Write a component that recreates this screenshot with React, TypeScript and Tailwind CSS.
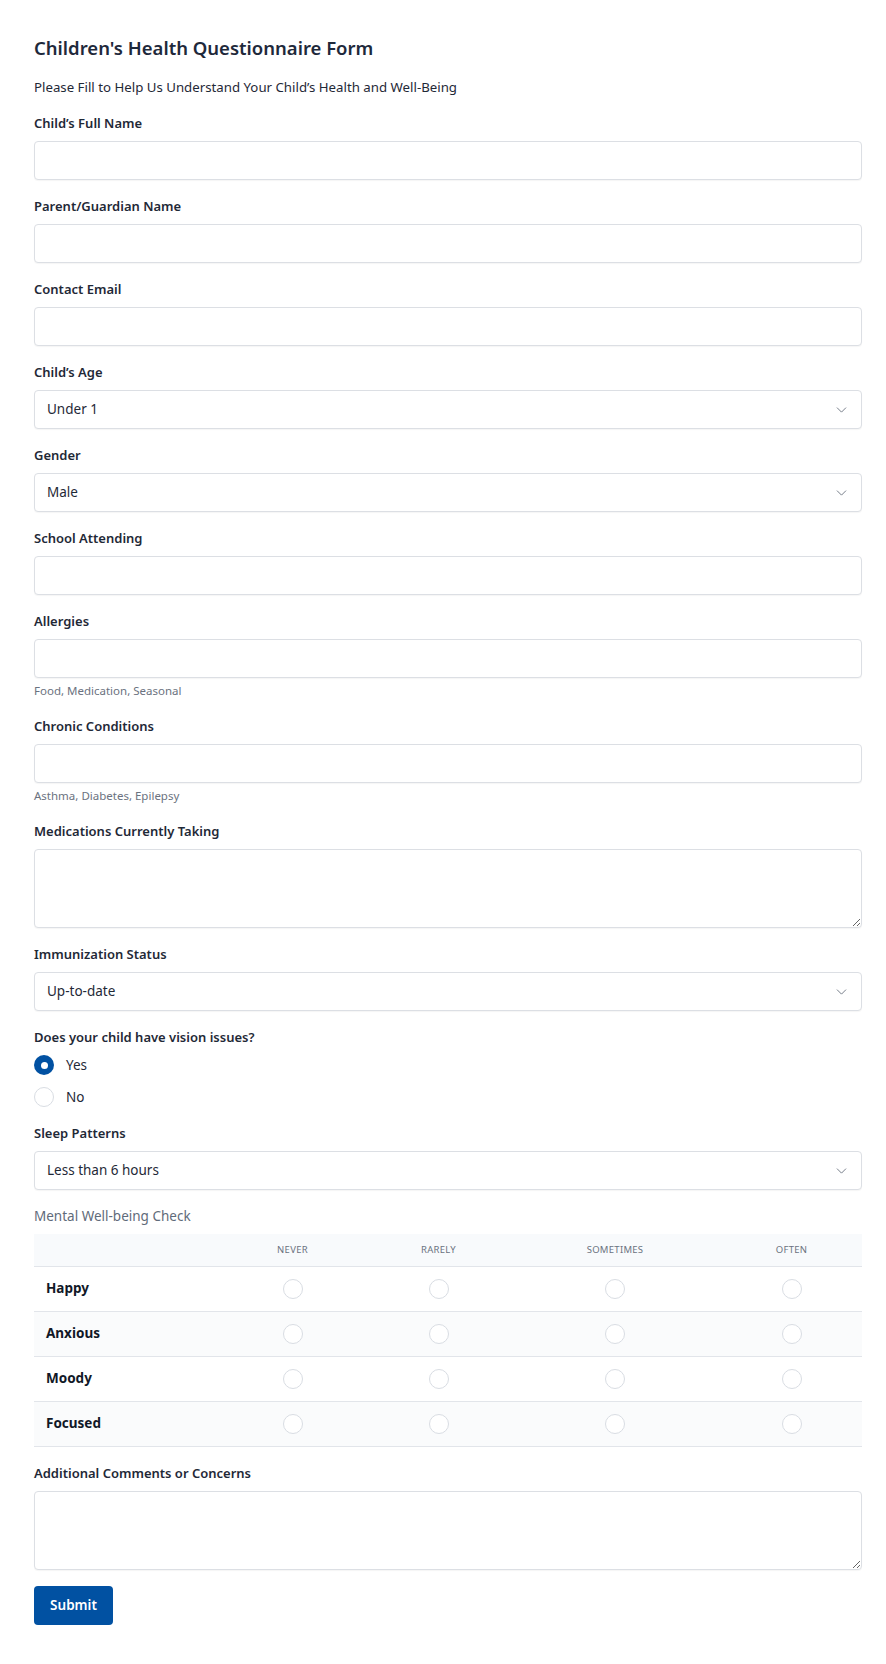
import React from 'react';
import { ChevronDown } from 'lucide-react';

const inputCls =
  'block w-full h-[39px] rounded-[4px] border border-[#dcdfe4] bg-white px-3 text-[13.5px] text-[#1f2937] shadow-[0_1px_1px_rgba(0,0,0,0.04)] outline-none';

function Label({ children }: { children: React.ReactNode }) {
  return <label className="block mb-2 text-[13px] leading-5 font-semibold text-[#1f2937]">{children}</label>;
}

function TextField({ label, help }: { label: string; help?: string }) {
  return (
    <div>
      <Label>{label}</Label>
      <input type="text" className={inputCls} />
      {help && <p className="mt-1 text-[11.5px] leading-[18px] text-[#6b7280]">{help}</p>}
    </div>
  );
}

function SelectField({ label, options }: { label: string; options: string[] }) {
  return (
    <div>
      <Label>{label}</Label>
      <div className="relative">
        <select className={inputCls + ' appearance-none pr-10'} defaultValue={options[0]}>
          {options.map((o) => (
            <option key={o}>{o}</option>
          ))}
        </select>
        <ChevronDown
          className="pointer-events-none absolute right-[12px] top-1/2 -translate-y-1/2 text-[#6b7280]"
          size={17}
          strokeWidth={1.3}
        />
      </div>
    </div>
  );
}

function AreaField({ label }: { label: string }) {
  return (
    <div>
      <Label>{label}</Label>
      <textarea className="block w-full h-[79px] rounded-[4px] border border-[#dcdfe4] bg-white px-3 py-2 text-[13.5px] outline-none shadow-[0_1px_1px_rgba(0,0,0,0.04)]" />
    </div>
  );
}

function Radio({ checked }: { checked?: boolean }) {
  return checked ? (
    <span className="flex h-5 w-5 items-center justify-center rounded-full bg-[#0151a2]">
      <span className="h-[7px] w-[7px] rounded-full bg-white" />
    </span>
  ) : (
    <span className="block h-5 w-5 rounded-full border border-[#d9dde3] bg-white" />
  );
}

const levels = ['Never', 'Rarely', 'Sometimes', 'Often'];
const widths = ['w-[151px]', 'w-[141px]', 'w-[212px]', 'w-[141px]'];
const moods = ['Happy', 'Anxious', 'Moody', 'Focused'];

export default function App() {
  return (
    <div className="min-h-screen bg-white pl-[34px] pr-[24px] pt-[34px] pb-10 font-['Noto_Sans',sans-serif] text-[#1f2937]">
      <h1 className="text-[18.5px] leading-7 font-semibold text-[#1e293b]">Children's Health Questionnaire Form</h1>
      <p className="mt-[15px] text-[13.25px] leading-5 text-[#1f2937]">
        Please Fill to Help Us Understand Your Child’s Health and Well-Being
      </p>

      <form className="mt-4 flex flex-col gap-4" onSubmit={(e) => e.preventDefault()}>
        <TextField label="Child’s Full Name" />
        <TextField label="Parent/Guardian Name" />
        <TextField label="Contact Email" />
        <SelectField label="Child’s Age" options={['Under 1', '1-3', '4-6', '7-12', '13-17']} />
        <SelectField label="Gender" options={['Male', 'Female', 'Other']} />
        <TextField label="School Attending" />
        <TextField label="Allergies" help="Food, Medication, Seasonal" />
        <TextField label="Chronic Conditions" help="Asthma, Diabetes, Epilepsy" />
        <AreaField label="Medications Currently Taking" />
        <SelectField label="Immunization Status" options={['Up-to-date', 'Partially', 'Not immunized']} />

        <div>
          <Label>Does your child have vision issues?</Label>
          <div className="flex flex-col gap-3">
            <div className="flex items-center gap-3">
              <Radio checked />
              <span className="text-[13.5px] leading-5">Yes</span>
            </div>
            <div className="flex items-center gap-3">
              <Radio />
              <span className="text-[13.5px] leading-5">No</span>
            </div>
          </div>
        </div>

        <SelectField label="Sleep Patterns" options={['Less than 6 hours', '6-8 hours', 'More than 8 hours']} />

        <div>
          <p className="mb-2 text-[13.5px] leading-5 text-[#5f6b7a]">Mental Well-being Check</p>
          <table className="w-full table-fixed border-collapse">
            <thead>
              <tr className="h-8 bg-[#f8fafc] border-b border-[#e2e5ea]">
                <th className="w-[183px]" />
                {levels.map((l, i) => (
                  <th
                    key={l}
                    className={
                      'text-center text-[9.5px] font-normal uppercase tracking-[0.03em] text-[#6b7280] ' + widths[i]
                    }
                  >
                    {l}
                  </th>
                ))}
              </tr>
            </thead>
            <tbody>
              {moods.map((m, r) => (
                <tr key={m} className={'h-[45px] border-b border-[#e2e5ea] ' + (r % 2 ? 'bg-[#fafbfc]' : 'bg-white')}>
                  <td className="pl-3 text-[13.5px] font-bold text-[#111827]">{m}</td>
                  {levels.map((l) => (
                    <td key={l}>
                      <div className="flex justify-center">
                        <Radio />
                      </div>
                    </td>
                  ))}
                </tr>
              ))}
            </tbody>
          </table>
        </div>

        <AreaField label="Additional Comments or Concerns" />

        <div>
          <button
            type="submit"
            className="h-[39px] w-[79px] rounded-[4px] bg-[#0151a2] text-[13.5px] font-semibold text-white"
          >
            Submit
          </button>
        </div>
      </form>
    </div>
  );
}
